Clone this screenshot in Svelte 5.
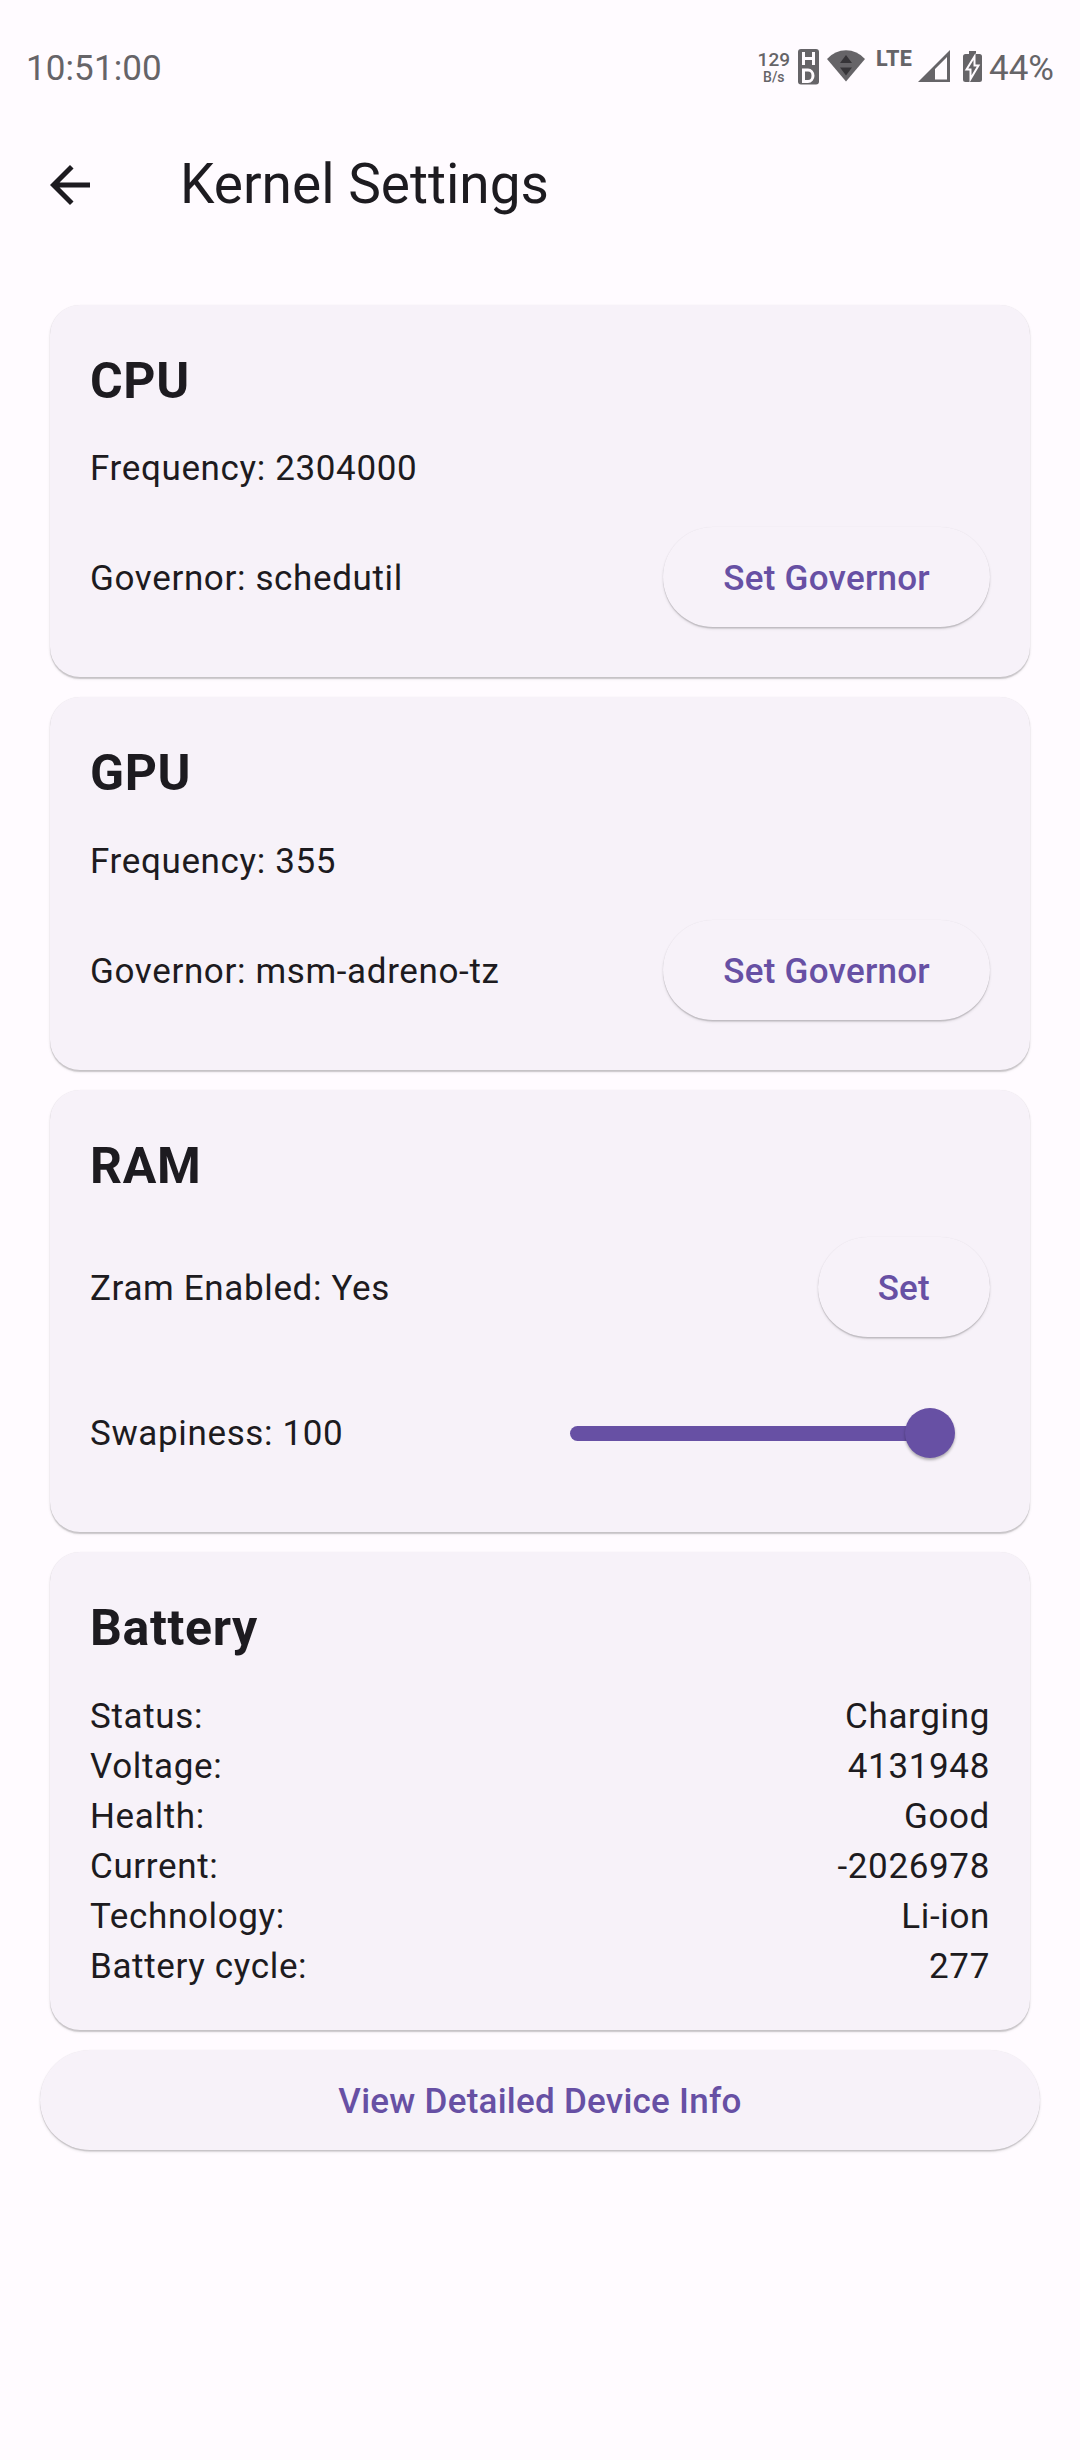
<script>
  const battery = [
    ['Status:', 'Charging'],
    ['Voltage:', '4131948'],
    ['Health:', 'Good'],
    ['Current:', '-2026978'],
    ['Technology:', 'Li-ion'],
    ['Battery cycle:', '277'],
  ];
  const processors = [
    { name: 'CPU', frequency: '2304000', governor: 'schedutil' },
    { name: 'GPU', frequency: '355', governor: 'msm-adreno-tz' },
  ];
</script>

<div class="screen">
  <div class="status">
    <span class="time">10:51:00</span>
    <div class="tray">
      <div class="net"><span class="rate">129</span><span class="unit">B/s</span></div>
      <svg class="hd" width="22" height="36" viewBox="0 0 22 36">
        <rect width="21" height="35.5" rx="3" fill="#666468" />
        <path d="M5.5 3v13M15.5 3v13M5.5 9.5h10" fill="none" stroke="#fffbff" stroke-width="3" />
        <path d="M5.5 21h4.500a5 5.700 0 0 1 0 11.400h-4.500z" fill="none" stroke="#fffbff" stroke-width="3" />
      </svg>
      <svg class="wifi" width="38" height="32" viewBox="0 0 38 32">
        <path d="M0 9Q8 0.300 19 0.300T38 9L19 31.500z" fill="#666468" />
        <path d="M13 13h12l-6-8zM13 17.500h12l-6 8z" fill="#363438" />
      </svg>
      <span class="lte">LTE</span>
      <svg class="signal" width="32" height="32" viewBox="0 0 32 32">
        <path d="M0 32L32 0V32zM17 29.500H29V7L17 19z" fill="#666468" fill-rule="evenodd" />
      </svg>
      <svg class="cell" width="20" height="32" viewBox="0 0 20 32">
        <path d="M6 0h7v3h3.500q2.500 0 2.500 2.500v23q0 2.500-2.500 2.500H2.500Q0 31 0 28.500v-23Q0 3 2.500 3H6z" fill="#666468" />
        <path d="M11.500 5.500L3.500 18.500h4v9.500l8-13.500h-4z" fill="#666468" stroke="#fffbff" stroke-width="2" />
      </svg>
      <span class="pct">44%</span>
    </div>
  </div>

  <header>
    <svg class="back" width="60" height="60" viewBox="0 0 24 24">
      <path d="M20 11H7.830l5.590-5.590L12 4l-8 8 8 8 1.410-1.410L7.830 13H20v-2z" fill="#1d1b20" />
    </svg>
    <h1>Kernel Settings</h1>
  </header>

  <main>
    {#each processors as p}
      <section>
        <h2>{p.name}</h2>
        <p>Frequency: {p.frequency}</p>
        <div class="row">
          <span>Governor: {p.governor}</span>
          <button>Set Governor</button>
        </div>
      </section>
    {/each}

    <section>
      <h2>RAM</h2>
      <div class="row">
        <span>Zram Enabled: Yes</span>
        <button>Set</button>
      </div>
      <div class="row">
        <span>Swapiness: 100</span>
        <div class="slider"><div class="track"></div><div class="thumb"></div></div>
      </div>
    </section>

    <section>
      <h2>Battery</h2>
      <dl>
        {#each battery as [label, value]}
          <div><dt>{label}</dt><dd>{value}</dd></div>
        {/each}
      </dl>
    </section>

    <button>View Detailed Device Info</button>
  </main>
</div>

<style>
  :global(body) { background: #fffbff; }
  .screen {
    box-sizing: border-box;
    width: 1080px;
    height: 2460px;
    background: #fffbff;
    color: #1d1b20;
    font: 400 35px/50px Roboto, sans-serif;
    letter-spacing: 0.640px;
  }
  .status {
    display: flex;
    justify-content: space-between;
    height: 135px;
    padding: 0 26px;
    box-sizing: border-box;
    color: #666468;
    letter-spacing: 0;
  }
  .time { padding-top: 44px; letter-spacing: 0.100px; }
  .tray { display: flex; align-items: flex-start; }
  .net { display: flex; flex-direction: column; align-items: center; padding-top: 50px; margin-right: 8px; font-weight: 500; }
  .rate { font-size: 19px; line-height: 19px; }
  .unit { font-size: 14px; line-height: 16px; }
  .hd { margin-top: 48.500px; margin-right: 7px; }
  .wifi { margin-top: 50px; margin-right: 11px; }
  .lte { margin-top: 48px; width: 38px; margin-right: 4px; font-size: 21.500px; font-weight: 800; letter-spacing: 0.500px; line-height: 22px; }
  .signal { margin-top: 50px; margin-right: 13px; }
  .cell { margin-top: 51px; margin-right: 6px; }
  .pct { padding-top: 44px; }

  header { display: flex; align-items: center; height: 100px; padding-left: 40px; }
  h1 { margin: -2px 0 0 80px; font-size: 55px; line-height: 70px; font-weight: 400; letter-spacing: 0; }
  .back { display: block; }

  main { display: flex; flex-direction: column; gap: 20px; padding: 69.700px 40px 0; }
  section {
    display: flex;
    flex-direction: column;
    gap: 25px;
    margin: 0 10px;
    padding: 40px;
    border-radius: 30px;
    background: #f7f2f9;
    box-shadow: 0 1.500px 1px rgba(0, 0, 0, 0.14), 0 2px 3px rgba(0, 0, 0, 0.1), 0 0 1px rgba(0, 0, 0, 0.08);
  }
  h2 { margin: 0; font-size: 50px; line-height: 72.500px; font-weight: 700; }
  p { margin: 0 0 -2px; padding-top: 2px; }
  .row { display: flex; align-items: center; justify-content: space-between; height: 120px; }
  .row span { padding-top: 4px; }
  button {
    box-sizing: border-box;
    height: 100px;
    padding: 4px 60px 0;
    border: 0;
    border-radius: 50px;
    background: #f7f2f9;
    box-shadow: 0 1.500px 1px rgba(0, 0, 0, 0.14), 0 2px 3px rgba(0, 0, 0, 0.1), 0 0 1px rgba(0, 0, 0, 0.08);
    color: #6750a4;
    font: 500 35px/50px Roboto, sans-serif;
    letter-spacing: 0.250px;
  }
  .slider { display: flex; align-items: center; width: 420px; padding-top: 2px; }
  .track { width: 360px; height: 15px; border-radius: 8px; background: #6750a4; }
  .thumb {
    width: 50px;
    height: 50px;
    margin-left: -25px;
    border-radius: 50%;
    background: #6750a4;
    box-shadow: 0 2px 3px rgba(0, 0, 0, 0.3);
  }
  dl { margin: 0 0 -2px; padding-top: 2px; }
  dl div { display: flex; justify-content: space-between; height: 50px; }
  dd { margin: 0; }
</style>
